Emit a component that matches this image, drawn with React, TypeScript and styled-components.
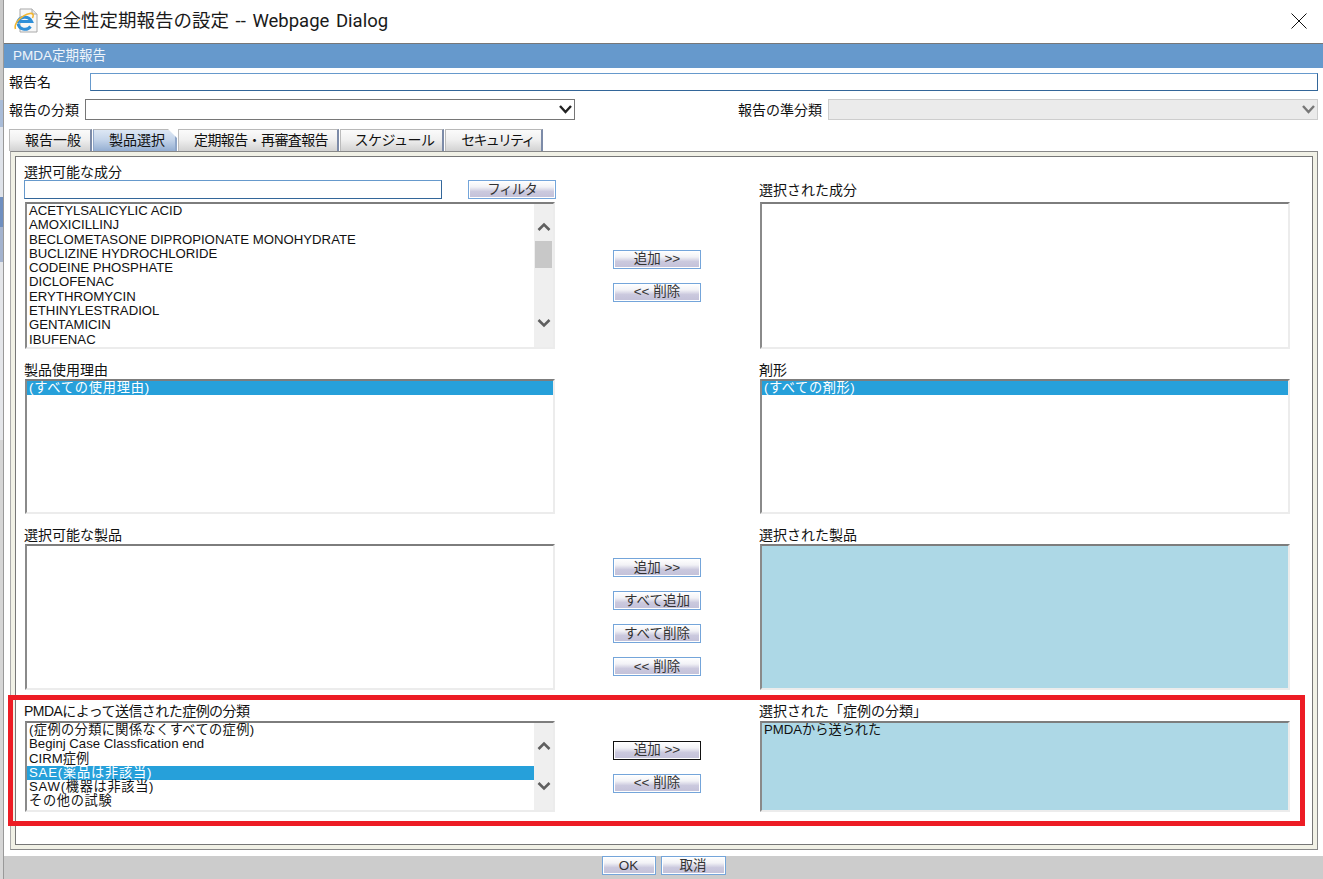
import React from 'react';
import styled, { createGlobalStyle, css } from 'styled-components';

const GlobalStyle = createGlobalStyle`
  html, body {
    margin: 0;
    padding: 0;
    background: #fff;
    overflow: hidden;
  }
  * {
    box-sizing: border-box;
  }
`;

const uiFont = `"Liberation Sans", "Noto Sans CJK JP", sans-serif`;

const Page = styled.div`
  position: relative;
  display: flex;
  width: 1323px;
  height: 879px;
  overflow: hidden;
  font-family: ${uiFont};
  color: #111;
`;

const BackStrip = styled.div`
  flex: 0 0 4px;
  border-right: 1px solid #999;
  background: linear-gradient(
    to bottom,
    #c9c9c9 0 100px,
    #a9bcd8 100px 127px,
    #dfe3ea 127px 197px,
    #6f8fc0 197px 227px,
    #a3b3cf 227px 262px,
    #e4e6ea 262px 440px,
    #d6d6d6 440px 879px
  );
`;

const Dialog = styled.div`
  flex: 1;
  display: flex;
  flex-direction: column;
  min-width: 0;
`;

const TitleBar = styled.div`
  display: flex;
  align-items: center;
  gap: 7px;
  height: 44px;
  padding: 0 16px 2px 10px;
  border-bottom: 1px solid #777;
`;

const TitleText = styled.div`
  flex: 1;
  margin-left: -1px;
  font-family: Roboto, "Noto Sans CJK JP", sans-serif;
  font-size: 18.5px;
  line-height: 24px;
  word-spacing: 2px;
  color: #1a1a1a;
`;

const HeaderBand = styled.div`
  height: 24px;
  padding-left: 9px;
  background: #6699cc;
  color: #eef4fb;
  font-size: 13.5px;
  line-height: 24px;
`;

const FormRow = styled.div<{ $top: number }>`
  display: flex;
  align-items: center;
  margin-top: ${(p) => p.$top}px;
  padding: 0 5px;
`;

const FieldLabel = styled.label<{ $width: number }>`
  flex: 0 0 ${(p) => p.$width}px;
  font-size: 14px;
  line-height: 16px;
  white-space: nowrap;
`;

const NameInput = styled.input`
  flex: 1;
  height: 18px;
  padding: 0 2px;
  border: 1px solid #6699cc;
  border-right-color: #336699;
  border-bottom-color: #336699;
  background: #fff;
  outline: none;
`;

const SelectBox = styled.div<{ $width: number; $gap?: number }>`
  position: relative;
  flex: 0 0 ${(p) => p.$width}px;
  height: 21px;
  margin-right: ${(p) => p.$gap ?? 0}px;
`;

const Dropdown = styled.select`
  display: block;
  width: 100%;
  height: 100%;
  appearance: none;
  border: 1px solid #767676;
  border-radius: 0;
  background: #fff;
  &:disabled {
    border-color: #b9b9b9;
    background: #e3e3e3;
  }
`;

const DropArrow = styled.svg`
  position: absolute;
  top: 5px;
  right: 3px;
  width: 13px;
  height: 10px;
  pointer-events: none;
`;

const TabStrip = styled.div`
  display: flex;
  gap: 1px;
  height: 22px;
  margin: 9px 0 0 5px;
`;

const Tab = styled.div<{ $width: number; $shift: number; $tight?: number; $active?: boolean }>`
  flex: 0 0 ${(p) => p.$width}px;
  padding-left: ${(p) => p.$shift}px;
  font-size: 14px;
  line-height: 21px;
  letter-spacing: ${(p) => p.$tight ?? 0}px;
  text-align: center;
  white-space: nowrap;
  border-top: 1px solid #b8b8b8;
  border-left: 1px solid #bbb;
  border-right: 2px solid #7c8ba8;
  background: linear-gradient(#fbfbfb, #f0f0f0 45%, #d2d2d2);
  ${(p) =>
    p.$active &&
    css`
      border-left-color: #8fa6c8;
      border-right-color: #8fa6c8;
      background: linear-gradient(#dde7f4, #c5d5ea 45%, #94aed2);
      clip-path: polygon(0 0, calc(100% - 9px) 0, 100% 9px, 100% 100%, 0 100%);
    `}
`;

const OuterPanel = styled.div`
  height: 699px;
  margin: 0 5px 0 6px;
  padding: 4px;
  border: 1px solid #888;
  border-left-color: #aaa;
  background: #f1f1e6;
`;

const InnerPanel = styled.div`
  display: flex;
  flex-direction: column;
  gap: 13px;
  height: 100%;
  padding: 7px 0 0 8px;
  border: 1px solid #777;
  background: #fff;
`;

const Section = styled.section<{ $labelRow: number; $listRow: number }>`
  display: grid;
  grid-template-columns: 532px 204px 530px;
  grid-template-rows: ${(p) => p.$labelRow}px ${(p) => p.$listRow}px;
`;

const Caption = styled.div<{ $tight?: number }>`
  font-size: 14px;
  line-height: 16px;
  letter-spacing: ${(p) => p.$tight ?? 0}px;
  white-space: nowrap;
`;

const RightCaption = styled(Caption)<{ $lift?: number }>`
  grid-column: 3;
  align-self: end;
  margin-left: -1px;
  padding-bottom: ${(p) => p.$lift ?? 0}px;
`;

const LeftHead = styled.div`
  grid-column: 1;
`;

const FilterRow = styled.div`
  display: flex;
  justify-content: space-between;
  align-items: center;
`;

const FilterInput = styled.input`
  width: 418px;
  height: 19px;
  padding: 0 2px;
  border: 1px solid #6699cc;
  border-bottom-color: #336699;
  border-right-color: #336699;
  outline: none;
`;

const ActionColumn = styled.div`
  grid-column: 2;
  grid-row: 2;
  display: flex;
  flex-direction: column;
  justify-content: center;
  align-items: center;
  gap: 14px;
  padding: 0 2px 0 0;
`;

const ActionButton = styled.button<{ $width?: number; $focused?: boolean; $tight?: number }>`
  flex: none;
  width: ${(p) => p.$width ?? 88}px;
  height: 19px;
  padding: 0;
  border: 1px solid ${(p) => (p.$focused ? '#111' : '#74a5da')};
  box-shadow: inset 0 0 0 1px #fff;
  background: linear-gradient(#fff, #f2f2f6 35%, #cbc9de 62%, #c3c1d9);
  color: #333;
  font-family: ${uiFont};
  font-size: 13.5px;
  line-height: 16px;
  letter-spacing: ${(p) => p.$tight ?? 0}px;
`;

const ListBox = styled.div<{ $fill?: boolean; $inset?: boolean }>`
  display: flex;
  min-height: 0;
  margin: 0 ${(p) => (p.$inset ? 1 : 0)}px;
  border: 2px solid #ececec;
  border-top-color: #7d7d7d;
  border-left-color: #8a8a8a;
  background: ${(p) => (p.$fill ? '#add8e6' : '#fff')};
`;

const Items = styled.ul`
  flex: 1;
  min-width: 0;
  margin: 0;
  padding: 0;
  list-style: none;
  overflow: hidden;
`;

const Item = styled.li<{ $selected?: boolean; $spread?: number }>`
  height: 14.3px;
  padding-left: 2px;
  font-size: 13.2px;
  line-height: 14.3px;
  letter-spacing: ${(p) => p.$spread ?? 0}px;
  white-space: nowrap;
  ${(p) =>
    p.$selected &&
    css`
      background: #26a0da;
      color: #fff;
    `}
`;

const Track = styled.div`
  flex: 0 0 19px;
  display: flex;
  flex-direction: column;
  align-items: center;
  padding: 18px 0 19px;
  background: #efefef;
`;

const TrackArrow = styled.svg`
  flex: none;
  width: 14px;
  height: 10px;
`;

const Thumb = styled.div`
  flex: none;
  width: 17px;
  height: 27px;
  margin-top: 9px;
  background: #c8c8c8;
`;

const TrackSpacer = styled.div`
  flex: 1;
`;

const Footer = styled.div`
  flex: 1;
  display: flex;
  justify-content: center;
  gap: 5px;
  margin-top: 6px;
  background: #cccccc;
`;

const CloseIcon = styled.svg`
  flex: none;
  width: 16px;
  height: 16px;
`;

const RedFrame = styled.div`
  position: absolute;
  left: 8px;
  top: 695px;
  width: 1297px;
  height: 131px;
  border: 5px solid #ed1c24;
  pointer-events: none;
`;

type Row = { text: string; spread?: number };

const Chevron = ({ up }: { up?: boolean }) => (
  <TrackArrow viewBox="0 0 14 10">
    <path
      d={up ? 'M1.5 8 L7 2.5 L12.5 8' : 'M1.5 2 L7 7.5 L12.5 2'}
      fill="none"
      stroke="#5f5f5f"
      strokeWidth="2.6"
    />
  </TrackArrow>
);

const Scrollbar = ({ thumb }: { thumb?: boolean }) => (
  <Track>
    <Chevron up />
    {thumb && <Thumb />}
    <TrackSpacer />
    <Chevron />
  </Track>
);

const List = ({
  items = [],
  selected,
  scroll,
  thumb,
  fill,
  inset,
}: {
  items?: Row[];
  selected?: number;
  scroll?: boolean;
  thumb?: boolean;
  fill?: boolean;
  inset?: boolean;
}) => (
  <ListBox $fill={fill} $inset={inset}>
    <Items>
      {items.map((row, i) => (
        <Item key={row.text} $selected={i === selected} $spread={row.spread}>
          {row.text}
        </Item>
      ))}
    </Items>
    {scroll && <Scrollbar thumb={thumb} />}
  </ListBox>
);

const IeIcon = () => (
  <svg width="24" height="25" viewBox="0 0 24 25" style={{ flex: 'none' }}>
    <path d="M6 1 H18 L23 6 V24 H6 Z" fill="#f7f7f7" stroke="#a9a9a9" />
    <path d="M18 1 V6 H23" fill="#e4e4e4" stroke="#a9a9a9" />
    <path
      d="M3.5 15 A7.5 7.5 0 0 1 17.5 13.5 H5.5 M4 15.5 A7 7 0 0 0 16.5 18.5"
      fill="none"
      stroke="#2f8fd8"
      strokeWidth="3"
    />
    <path
      d="M1.5 21 C-0.5 15 8 7 16 5.5 C19 5 20 7 18.5 10"
      fill="none"
      stroke="#f2b632"
      strokeWidth="1.6"
    />
  </svg>
);

const tabs = [
  { label: '報告一般', width: 83, shift: 6 },
  { label: '製品選択', width: 84, shift: 5, active: true },
  { label: '定期報告・再審査報告', width: 161, shift: 6, tight: -0.6 },
  { label: 'スケジュール', width: 104, shift: 6, tight: -0.5 },
  { label: 'セキュリティ', width: 98, shift: 8, tight: -1.8 },
];

const ingredients: Row[] = [
  { text: 'ACETYLSALICYLIC ACID' },
  { text: 'AMOXICILLINJ' },
  { text: 'BECLOMETASONE DIPROPIONATE MONOHYDRATE' },
  { text: 'BUCLIZINE HYDROCHLORIDE' },
  { text: 'CODEINE PHOSPHATE' },
  { text: 'DICLOFENAC' },
  { text: 'ERYTHROMYCIN' },
  { text: 'ETHINYLESTRADIOL' },
  { text: 'GENTAMICIN' },
  { text: 'IBUFENAC' },
];

const caseTypes: Row[] = [
  { text: '(症例の分類に関係なくすべての症例)', spread: 0.4 },
  { text: 'Beginj Case Classfication end' },
  { text: 'CIRM症例' },
  { text: 'SAE(薬品は非該当)', spread: 0.8 },
  { text: 'SAW(機器は非該当)', spread: 0.7 },
  { text: 'その他の試験', spread: 0.7 },
];

const App = () => {
  return (
    <Page>
      <GlobalStyle />
      <BackStrip />
      <Dialog>
        <TitleBar>
          <IeIcon />
          <TitleText>安全性定期報告の設定 -- Webpage Dialog</TitleText>
          <CloseIcon viewBox="0 0 16 16">
            <path d="M0.5 0.5 L15.5 15.5 M15.5 0.5 L0.5 15.5" stroke="#111" strokeWidth="1" />
          </CloseIcon>
        </TitleBar>
        <HeaderBand>PMDA定期報告</HeaderBand>

        <FormRow $top={5}>
          <FieldLabel $width={81}>報告名</FieldLabel>
          <NameInput />
        </FormRow>
        <FormRow $top={8}>
          <FieldLabel $width={76}>報告の分類</FieldLabel>
          <SelectBox $width={490} $gap={163}>
            <Dropdown />
            <DropArrow viewBox="0 0 13 10">
              <path d="M1 2 L6.5 8 L12 2" fill="none" stroke="#222" strokeWidth="2.4" />
            </DropArrow>
          </SelectBox>
          <FieldLabel $width={90}>報告の準分類</FieldLabel>
          <SelectBox $width={490}>
            <Dropdown disabled />
            <DropArrow viewBox="0 0 13 10">
              <path d="M1 2 L6.5 8 L12 2" fill="none" stroke="#777" strokeWidth="2.4" />
            </DropArrow>
          </SelectBox>
        </FormRow>

        <TabStrip>
          {tabs.map((t) => (
            <Tab key={t.label} $width={t.width} $shift={t.shift} $tight={t.tight} $active={t.active}>
              {t.label}
            </Tab>
          ))}
        </TabStrip>

        <OuterPanel>
          <InnerPanel>
            <Section $labelRow={38} $listRow={147}>
              <LeftHead>
                <Caption>選択可能な成分</Caption>
                <FilterRow>
                  <FilterInput />
                  <ActionButton $tight={-1}>フィルタ</ActionButton>
                </FilterRow>
              </LeftHead>
              <RightCaption $lift={4}>選択された成分</RightCaption>
              <List inset scroll thumb items={ingredients} />
              <ActionColumn>
                <ActionButton>追加 &gt;&gt;</ActionButton>
                <ActionButton>&lt;&lt; 削除</ActionButton>
              </ActionColumn>
              <List />
            </Section>

            <Section $labelRow={17} $listRow={135}>
              <Caption>製品使用理由</Caption>
              <RightCaption $lift={1}>剤形</RightCaption>
              <List inset items={[{ text: '(すべての使用理由)', spread: 0.8 }]} selected={0} />
              <ActionColumn />
              <List items={[{ text: '(すべての剤形)', spread: 0.6 }]} selected={0} />
            </Section>

            <Section $labelRow={17} $listRow={146}>
              <Caption>選択可能な製品</Caption>
              <RightCaption $lift={1}>選択された製品</RightCaption>
              <List inset />
              <ActionColumn>
                <ActionButton>追加 &gt;&gt;</ActionButton>
                <ActionButton>すべて追加</ActionButton>
                <ActionButton>すべて削除</ActionButton>
                <ActionButton>&lt;&lt; 削除</ActionButton>
              </ActionColumn>
              <List fill />
            </Section>

            <Section $labelRow={18} $listRow={91}>
              <Caption $tight={-0.55}>PMDAによって送信された症例の分類</Caption>
              <RightCaption $lift={2}>選択された「症例の分類」</RightCaption>
              <List inset scroll items={caseTypes} selected={3} />
              <ActionColumn>
                <ActionButton $focused>追加 &gt;&gt;</ActionButton>
                <ActionButton>&lt;&lt; 削除</ActionButton>
              </ActionColumn>
              <List fill items={[{ text: 'PMDAから送られた' }]} />
            </Section>
          </InnerPanel>
        </OuterPanel>

        <Footer>
          <ActionButton $width={54}>OK</ActionButton>
          <ActionButton $width={65}>取消</ActionButton>
        </Footer>
      </Dialog>
      <RedFrame />
    </Page>
  );
};

export default App;
